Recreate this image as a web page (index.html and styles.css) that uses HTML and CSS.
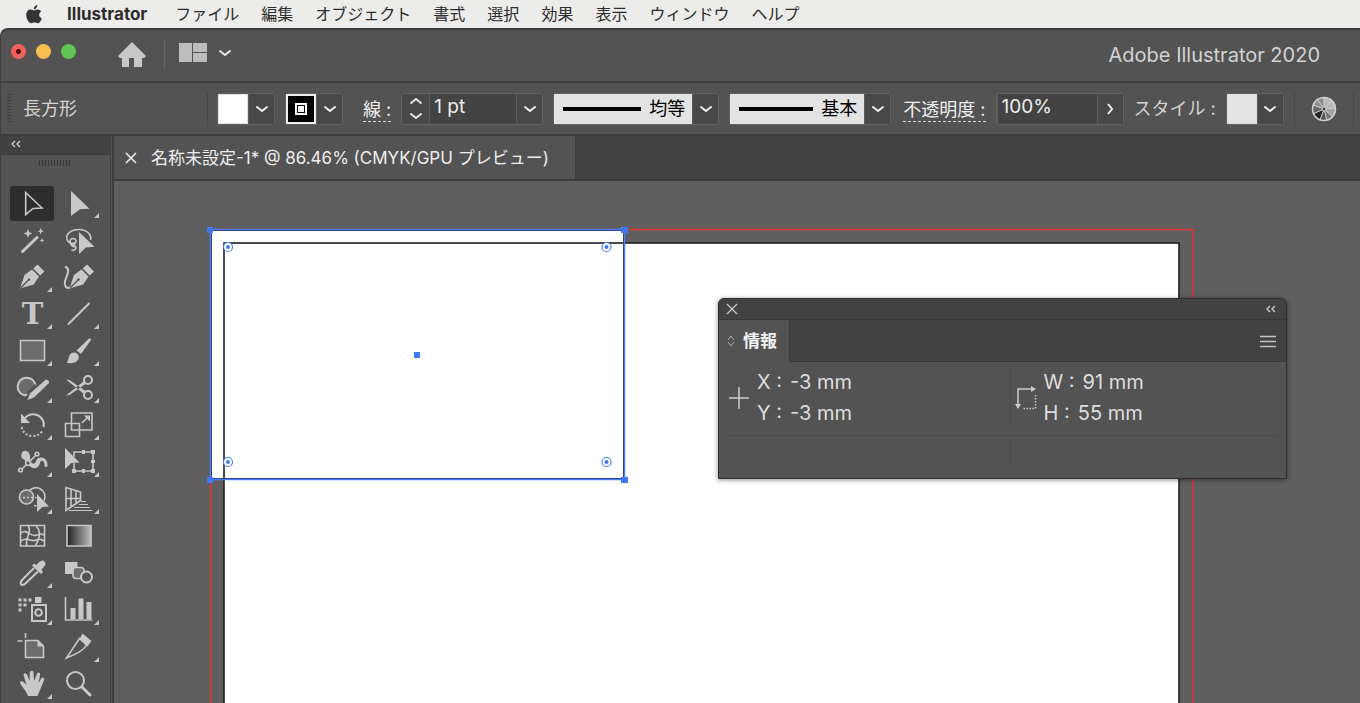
FILE: index.html
```html
<!DOCTYPE html>
<html lang="ja">
<head>
<meta charset="utf-8">
<title>Adobe Illustrator 2020</title>
<link rel="stylesheet" href="styles.css">
</head>
<body>
<svg class="defs" aria-hidden="true">
  <symbol id="down" viewBox="0 0 14 8"><path d="M2 2l5 4 5-4" fill="none" stroke="currentColor" stroke-width="2" stroke-linecap="round"/></symbol>
  <symbol id="up" viewBox="0 0 14 8"><path d="M2 6l5-4 5 4" fill="none" stroke="currentColor" stroke-width="2" stroke-linecap="round"/></symbol>
  <symbol id="collapse" viewBox="0 0 10 8"><path d="M4 1L1 4l3 3M9 1L6 4l3 3" fill="none" stroke="currentColor" stroke-width="1.4"/></symbol>
</svg>

<nav class="menubar">
  <svg class="apple" viewBox="0 0 16 19" aria-label="Apple"><path d="M11.3 0c.2 2-1.500 4.300-3.500 4.300C7.500 2.300 9.300.4 11.300 0zM8.200 5.500c.7 0 1.700-1 3.400-1 1.500 0 2.900.8 3.600 2-3 1.700-2.500 5.700.6 6.900-.8 2.300-2.400 4.900-4.100 4.900-1.200 0-1.700-.7-3.200-.7s-2.100.7-3.200.7C3.100 18.300.2 13.700.2 10 .2 6.600 2.300 4.600 4.500 4.600c1.600 0 2.700.9 3.700.9z"/></svg>
  <button class="menu app">Illustrator</button>
  <button class="menu">ファイル</button>
  <button class="menu">編集</button>
  <button class="menu">オブジェクト</button>
  <button class="menu">書式</button>
  <button class="menu">選択</button>
  <button class="menu">効果</button>
  <button class="menu">表示</button>
  <button class="menu">ウィンドウ</button>
  <button class="menu">ヘルプ</button>
</nav>

<div class="window">
  <header class="appbar">
    <div class="lights">
      <button class="light red" aria-label="閉じる"></button>
      <button class="light yellow" aria-label="しまう"></button>
      <button class="light green" aria-label="拡大"></button>
    </div>
    <button class="plain home" aria-label="ホーム"><svg width="28" height="26" viewBox="0 0 28 26"><path fill="#c8c8c8" d="M14 0L0 14l2 2h2v9h7v-9h5v9h8v-9h2l2-2z"/></svg></button>
    <span class="rule tall"></span>
    <button class="plain arrange" aria-label="ドキュメントレイアウト">
      <svg width="28" height="19" viewBox="0 0 28 19"><path fill="#bdbdbd" d="M0 0h13v19H0zM14 0h14v9H14zM14 10h14v9H14z"/></svg>
      <svg width="14" height="8"><use href="#down"/></svg>
    </button>
    <h1 class="title">Adobe Illustrator 2020</h1>
  </header>

  <section class="controls">
    <span class="grip"></span>
    <span class="kind">長方形</span>
    <span class="rule"></span>
    <div class="field">
      <button class="swatch white" aria-label="塗り"></button>
      <button class="drop" aria-label="塗りを選択"><svg width="14" height="8"><use href="#down"/></svg></button>
    </div>
    <div class="field">
      <button class="swatch stroke" aria-label="線の色"><span></span></button>
      <button class="drop" aria-label="線の色を選択"><svg width="14" height="8"><use href="#down"/></svg></button>
    </div>
    <label class="name dotted weight-name" for="weight">線 :</label>
    <div class="field">
      <div class="stepper">
        <button aria-label="増やす"><svg width="14" height="8"><use href="#up"/></svg></button>
        <button aria-label="減らす"><svg width="14" height="8"><use href="#down"/></svg></button>
      </div>
      <input class="value weight" id="weight" value="1 pt">
      <button class="drop" aria-label="線幅を選択"><svg width="14" height="8"><use href="#down"/></svg></button>
    </div>
    <div class="field">
      <button class="preview profile"><span class="bar"></span>均等</button>
      <button class="drop" aria-label="可変線幅プロファイル"><svg width="14" height="8"><use href="#down"/></svg></button>
    </div>
    <div class="field">
      <button class="preview brush"><span class="bar"></span>基本</button>
      <button class="drop" aria-label="ブラシ定義"><svg width="14" height="8"><use href="#down"/></svg></button>
    </div>
    <label class="name dotted opacity-name" for="opacity">不透明度 :</label>
    <div class="field">
      <input class="value opacity" id="opacity" value="100%">
      <button class="drop" aria-label="不透明度を選択"><svg width="8" height="14" viewBox="0 0 8 14"><path d="M2 2l4 5-4 5" fill="none" stroke="currentColor" stroke-width="2"/></svg></button>
    </div>
    <span class="name soft">スタイル :</span>
    <div class="field">
      <button class="swatch pale" aria-label="スタイル"></button>
      <button class="drop" aria-label="スタイルを選択"><svg width="14" height="8"><use href="#down"/></svg></button>
    </div>
    <span class="rule"></span>
    <button class="plain recolor" aria-label="オブジェクトを再配色">
      <svg width="26" height="26" viewBox="-13 -13 26 26">
        <circle r="12" fill="#8c8c8c"/>
        <path fill="#b8b8b8" d="M0 0L0-12A12 12 0 0 1 8-9zM0 0L8-9A12 12 0 0 1 12-1z"/>
        <path fill="#a4a4a4" d="M0 0L12-1A12 12 0 0 1 9 8z"/>
        <path fill="#777" d="M0 0L9 8A12 12 0 0 1 3 12z"/>
        <path fill="#555" d="M0 0L3 12A12 12 0 0 1-4 11z"/>
        <path fill="#222" d="M0 0L-4 11A12 12 0 0 1-11 5z"/>
        <path fill="#666" d="M0 0L-11 5A12 12 0 0 1-11-4z"/>
        <path stroke="#d0d0d0" d="M0 0V-12M0 0L8-9M0 0L12-1M0 0L9 8M0 0L3 12M0 0L-4 11M0 0L-11 5M0 0L-11-4M0 0L-7-10"/>
        <circle r="11.500" fill="none" stroke="#cfcfcf" stroke-width="1.500"/>
        <circle r="2" fill="#444" stroke="#d0d0d0"/>
      </svg>
    </button>
    <span class="rule end"></span>
  </section>

  <div class="work">
    <aside class="toolbar">
      <button class="collapse" aria-label="パネルを折りたたむ"><svg width="10" height="8"><use href="#collapse"/></svg></button>
      <span class="handle"></span>
      <div class="tools">
        <button class="tool on" aria-label="選択"><svg viewBox="10 186 44 35"><path class="o" d="M25.700 192.500V214.500L33 208.500L42 208z"/></svg></button>
        <button class="tool more" aria-label="ダイレクト選択"><svg viewBox="57 186 44 35"><path class="f" d="M71 191V216L80 209.300L89.500 208.700z"/></svg></button>

        <button class="tool" aria-label="自動選択"><svg viewBox="10 223 44 35"><path class="o w3" d="M22.500 251.500L37 237.500"/><path class="f" d="M28 229l1.200 3.300 3.300 1.200-3.300 1.200L28 238l-1.200-3.300-3.300-1.200 3.300-1.200zM40.700 228l.9 2.300 2.300.9-2.300.9-.9 2.400-.9-2.400-2.300-.9 2.300-.9zM42 238l.7 1.700 1.700.7-1.700.7-.7 1.700-.7-1.700-1.700-.7 1.700-.7z"/></svg></button>
        <button class="tool" aria-label="なげなわ"><svg viewBox="57 223 44 35"><path class="o" d="M90.500 240C92 235 87 229.500 79 229.500C71 229.500 65.500 234 67 239.500C68 243.500 76 245 76 241C76 237.500 70 237.500 70 241.500C70 246 76 247 75 242M71 243.500C71 249 78 244.500 75.500 249Q74 251 71.500 250"/><path class="f" d="M79 232V254L86 247.500L94.500 246.700z"/></svg></button>

        <button class="tool more" aria-label="ペン"><svg viewBox="10 260 44 35"><path class="f" d="M37.500 264.500l7 7-4.300 4-7-7zM20 288.500l4.500-13.500 7.500-5.500 7 7-5.300 8z"/><path class="cut" d="M20.500 288l8-8"/><circle class="hole" cx="29" cy="279.500" r="1.200"/></svg></button>
        <button class="tool" aria-label="曲線"><svg viewBox="57 260 44 35"><path class="f" d="M87 264.500l7 7-4.300 4-7-7zM69.500 288.500l4.500-13.500 7.500-5.500 7 7-5.300 8z"/><path class="cut" d="M70 288l8-8"/><circle class="hole" cx="78.500" cy="279.500" r="1.200"/><path class="o w2" d="M65 266.500C71 269 67 275 65 281C64 286 66 289 70 287.500"/></svg></button>

        <button class="tool more" aria-label="文字"><svg viewBox="10 297 44 35"><text class="letter" x="32.500" y="324" text-anchor="middle">T</text></svg></button>
        <button class="tool more" aria-label="直線"><svg viewBox="57 297 44 35"><path class="o w2" d="M68 324.500L89.500 303"/></svg></button>

        <button class="tool more" aria-label="長方形"><svg viewBox="10 334 44 35"><path class="o g" d="M20.500 340.500h24v20h-24z"/></svg></button>
        <button class="tool more" aria-label="ブラシ"><svg viewBox="57 334 44 35"><path class="f" d="M89 338.500q2.500-.5 2 1.500L81 354l-4.500-3.500zM66.500 362.500c3-2 1-8.500 6.500-10 4-.5 7 3 5.500 6.500-1.500 4-8 5-12 3.500z"/></svg></button>

        <button class="tool more" aria-label="Shaper"><svg viewBox="10 371 44 35"><path class="o w2 g" d="M25 395.500A9 9 0 1 1 35.500 385L27 394z"/><path d="M36 385l-9 9" stroke="#535353" stroke-width="3"/><path class="f" d="M46 379.500q3.500.5 3 3.500L34 397.500l-6.500 2.500 2.500-6.500z"/></svg></button>
        <button class="tool more" aria-label="はさみ"><svg viewBox="57 371 44 35"><g class="o w2"><circle cx="88" cy="380" r="4"/><circle cx="88" cy="395" r="4"/></g><path class="f" d="M66 379.500l3.500.5 16 11-1.500 3zM66 395.500l3.500-.5 16-11-1.500-3z"/></svg></button>

        <button class="tool more" aria-label="回転"><svg viewBox="10 408 44 35"><path class="o w2" d="M24 419Q29 413.500 35 414.500C41 415.500 45 421 43.500 427"/><path class="f" d="M21 413.500V423H30z"/><path class="o w2 dots" d="M42 431.500Q38 436.500 32 436Q24 435.500 21.500 427"/></svg></button>
        <button class="tool more" aria-label="拡大・縮小"><svg viewBox="57 408 44 35"><path class="o" d="M71.500 413h20.500v17H71.500zM65.500 423.500H79.500V436.500H65.500zM82 423l5-5"/><path class="f" d="M84 415.500h6V421.500z"/></svg></button>

        <button class="tool more" aria-label="線幅"><svg viewBox="10 445 44 35"><path class="o w3" d="M23 457C22 450 28 451 28.500 458C29 468 37 468 38 463C39 456 46 459 46 465.500"/><path class="f" d="M22 458C20 449 31 449 30 458L27 462zM29 465C33 471 40 468 40 462L44 459C40 456 36 459 36 461C35 465 32 464 30 461z"/><path class="o" d="M21 470L37 454"/><g class="o k"><circle cx="20.500" cy="470" r="1.800"/><circle cx="28" cy="463" r="2.400"/><circle cx="37" cy="454" r="1.800"/></g></svg></button>
        <button class="tool more" aria-label="自由変形"><svg viewBox="57 445 44 35"><path class="o" d="M74 452h19v19h-19z"/><path class="f" d="M72 469h4v4h-4zM91 469h4v4h-4zM91 450h4v4h-4zM82 450h3v4h-3zM82 469h3v4h-3zM91 460h4v3h-4z"/><path class="f e" d="M65 448V469L71.500 463L79.500 462.500z"/></svg></button>

        <button class="tool more" aria-label="シェイプ形成"><svg viewBox="10 482 44 35"><path class="o" d="M29 491A9 9 0 1 1 34 505.500"/><circle class="o g" cx="26.500" cy="497" r="7"/><path class="o dots" d="M23 497.500H38"/><path class="f e" d="M37 494V512L42.500 507L49 506.500z"/></svg></button>
        <button class="tool more" aria-label="遠近グリッド"><svg viewBox="57 482 44 35"><path class="o" d="M66 487.500L80.500 492V500.500L66 510.500zM71 489V507M76 490.500V504M66 498.500H80.500"/><path class="o w1" d="M81 501.500H86M79 504.500H88M74 507.500H90M69 510.500H92.500"/></svg></button>

        <button class="tool" aria-label="メッシュ"><svg viewBox="10 519 44 35"><path class="o" d="M20.500 525.500h24v20.500h-24zM28 526C33 532 24 538 27 546M36 526C42 532 39 540 35 546M21 533C27 528 30 538 37 535Q41 533 44 535M21 541C27 536 32 543 36 540Q40 538 44 541"/></svg></button>
        <button class="tool" aria-label="グラデーション"><svg viewBox="57 519 44 35"><defs><linearGradient id="ramp"><stop stop-color="#222"/><stop offset="1" stop-color="#bbb"/></linearGradient></defs><path class="o ramp" d="M67 525.500h24v20.500h-24z"/></svg></button>

        <button class="tool more" aria-label="スポイト"><svg viewBox="10 556 44 35"><path class="o w2" d="M34 568L22.500 579.500Q20 582 21 584.500Q23 586 26 583L38 571.500"/><path class="f" d="M32 565.500l2-2 2.500 1.500C39 562 42 559 44.500 561.500S44 567 41.500 569.500L43 572l-2 2z"/></svg></button>
        <button class="tool" aria-label="ブレンド"><svg viewBox="57 556 44 35"><path class="f" d="M65 562h12.500v12H65z"/><rect class="o g" x="73" y="567.500" width="11" height="11" rx="3"/><circle class="o w2 k" cx="86.500" cy="577" r="5.500"/></svg></button>

        <button class="tool more" aria-label="シンボルスプレー"><svg viewBox="10 593 44 35"><path class="f" d="M18.500 598.500h3v3h-3zM23.500 598.500h3v3h-3zM28.500 598.500h3v3h-3zM18.500 603.500h3v3h-3zM23.500 603.500h3v3h-3zM18.500 608.500h3v3h-3zM35 597h6.500v6H35z"/><path class="o w2" d="M32 605h14v16H32z"/><circle class="o w2" cx="38.500" cy="612.500" r="3.300"/></svg></button>
        <button class="tool more" aria-label="棒グラフ"><svg viewBox="57 593 44 35"><path class="o" d="M65.500 597V620H92.500"/><path class="f" d="M70.500 608h5v11h-5zM78.500 598.500h5v20.500h-5zM86.500 602h5v17h-5z"/></svg></button>

        <button class="tool" aria-label="アートボード"><svg viewBox="10 630 44 35"><path class="o g" d="M25.500 640.500H38L43.500 646V657.500H25.500z"/><path class="f" d="M37.500 640.500V646.500H43.500z"/><path class="o" d="M17.500 641H22.500M25.500 633V638"/></svg></button>
        <button class="tool more" aria-label="スライス"><svg viewBox="57 630 44 35"><path class="o" d="M66.500 658L79.500 638.500L86.500 645Q84 651 66.500 658z"/><path class="f" d="M82.500 633.500l9 7.500-4 5.500-8-7.500z"/></svg></button>

        <button class="tool more" aria-label="手のひら"><svg viewBox="10 667 44 35"><path class="f" d="M28 696C26 690 21.500 687 20 682.500C20.500 680 24 681.500 26.500 685L23.500 675C24 672.500 26.500 673 27.500 675.500L29.500 681L29.800 672.500C30.500 670 33.500 670.500 33.500 672.500L34.200 681L37 673.500C38.500 671.500 40.500 673 40 675.500L38.500 683L41.500 678C43.500 676.500 45 678.500 44 680.500L40 690L37.500 696z"/></svg></button>
        <button class="tool" aria-label="ズーム"><svg viewBox="57 667 44 35"><circle class="o w2" cx="75.500" cy="680.500" r="8.500"/><path class="o w3" d="M82 687L90 695"/></svg></button>
      </div>
    </aside>

    <main class="main">
      <div class="tabs">
        <div class="tab">
          <button class="plain" aria-label="閉じる"><svg width="12" height="12" viewBox="0 0 12 12"><path d="M1 1l10 10M11 1L1 11" stroke="#eee" stroke-width="1.600"/></svg></button>
          <span>名称未設定-1* @ 86.46% (CMYK/GPU プレビュー)</span>
        </div>
      </div>
      <div class="canvas">
        <svg class="artwork" aria-label="アートボード">
          <rect x="97" y="48.500" width="982" height="700" fill="none" stroke="#e0342c" stroke-width="1.500"/>
          <rect x="110" y="62" width="955" height="700" fill="#fff"/>
          <rect x="97" y="49" width="413" height="249" fill="#fff"/>
          <rect x="110" y="62" width="955" height="700" fill="none" stroke="#1e1e1e" stroke-width="1.600"/>
          <g fill="none">
            <rect x="97" y="49" width="413" height="249" stroke="#2b3550" stroke-width="2"/>
            <rect x="96.500" y="48.500" width="414" height="250" stroke="#4a7dff" stroke-width="1.500"/>
          </g>
          <path fill="#3f78ff" d="M93 46h6v6h-6zM507 46h7v6h-7zM93 296h6v6h-6zM507 296h7v6h-7zM300 171h6v6h-6z"/>
          <g fill="#fff" stroke="#4a7dff" stroke-width="1.200">
            <circle cx="114" cy="66" r="4.500"/><circle cx="492.500" cy="66" r="4.500"/><circle cx="114" cy="281" r="4.500"/><circle cx="492.500" cy="281" r="4.500"/>
          </g>
          <g fill="#3f78ff">
            <circle cx="114" cy="66" r="2"/><circle cx="492.500" cy="66" r="2"/><circle cx="114" cy="281" r="2"/><circle cx="492.500" cy="281" r="2"/>
          </g>
        </svg>

        <section class="info">
          <div class="info-head">
            <button class="plain" aria-label="閉じる"><svg width="12" height="12" viewBox="0 0 12 12"><path d="M1 1l10 10M11 1L1 11" stroke="#ccc" stroke-width="1.300"/></svg></button>
            <button class="plain" aria-label="折りたたむ"><svg width="10" height="8"><use href="#collapse"/></svg></button>
          </div>
          <div class="info-tabs">
            <button class="info-tab"><svg width="8" height="12" viewBox="0 0 8 12"><path d="M1 5l3-4 3 4M1 7l3 4 3-4" fill="none" stroke="#aaa"/></svg>情報</button>
            <button class="plain" aria-label="パネルメニュー"><svg width="16" height="13" viewBox="0 0 16 13"><path d="M0 1.500h16M0 6.500h16M0 11.500h16" stroke="#c4c4c4" stroke-width="1.500"/></svg></button>
          </div>
          <div class="info-body">
            <div class="cell">
              <svg width="22" height="24" viewBox="0 0 22 24"><path d="M1 12h20M11 1v22" stroke="#ccc" stroke-width="1.500"/></svg>
              <dl><div><dt>X :</dt><dd>-3 mm</dd></div><div><dt>Y :</dt><dd>-3 mm</dd></div></dl>
            </div>
            <div class="cell">
              <svg width="22" height="24" viewBox="0 0 22 24"><path d="M3 19V3H17" fill="none" stroke="#ccc" stroke-width="1.500"/><path fill="#ccc" d="M16 0l5 3-5 3zM0 18h6l-3 5z"/><path d="M20.500 9V23M19 22.500H8" fill="none" stroke="#ccc" stroke-width="1.500" stroke-dasharray="1.500 1.500"/></svg>
              <dl><div><dt>W :</dt><dd>91 mm</dd></div><div><dt>H :</dt><dd>55 mm</dd></div></dl>
            </div>
            <div class="cell blank"></div>
            <div class="cell blank"></div>
          </div>
        </section>
      </div>
    </main>
  </div>
</div>
</body>
</html>
```
FILE: styles.css
```css
* { box-sizing: border-box; }

body {
  margin: 0;
  height: 100vh;
  display: flex;
  flex-direction: column;
  overflow: hidden;
  background: #ececea;
  color: #e6e6e6;
  font: 18px/24px Inter, "Noto Sans CJK JP", sans-serif;
}

button, input { font: inherit; color: inherit; border: 0; margin: 0; padding: 0; background: none; border-radius: 0; }
svg { display: block; flex: none; }
.defs { position: absolute; width: 0; height: 0; }
.plain { display: flex; align-items: center; }

.menubar {
  flex: none;
  display: flex;
  align-items: center;
  gap: 22px;
  height: 28px;
  padding-left: 26px;
  color: #2c2c2c;
  font-size: 16px;
}
.apple { width: 16px; height: 19px; fill: #333; }
.menu { white-space: nowrap; }
.app { font-size: 17px; font-weight: 700; padding: 0 6px 0 3px; }

.window {
  flex: 1;
  min-height: 0;
  display: flex;
  flex-direction: column;
  background: #535353;
  border-top: 2px solid #3a3a3a;
  border-left: 1px solid #3f3f3f;
  border-top-left-radius: 8px;
}

.appbar {
  flex: none;
  display: flex;
  align-items: center;
  height: 53px;
  padding: 0 40px 2px 10px;
  border-bottom: 2px solid #3f3f3f;
}
.lights { display: flex; gap: 10px; padding-bottom: 7px; }
.light { width: 15px; height: 15px; border-radius: 50%; }
.red { background: radial-gradient(circle, #4a0906 2px, #f2605a 3px); }
.yellow { background: #f6be4f; }
.green { background: #62c655; }
.home { margin-left: 42px; }
.rule { flex: none; width: 1px; height: 34px; background: #484848; }
.rule.tall { height: 30px; margin: 0 14px 0 18px; background: #656565; }
.arrange { gap: 11px; padding-bottom: 4px; }
.title { margin: 0 0 0 auto; color: #d2d2d2; font-size: 20px; font-weight: 400; }

.controls {
  flex: none;
  display: flex;
  align-items: center;
  gap: 10px;
  height: 53px;
  padding-left: 6px;
  border-bottom: 2px solid #3d3d3d;
}
.grip { width: 4px; height: 30px; background: repeating-linear-gradient(#3c3c3c 0 1px, #535353 1px 3px); }
.kind { width: 174px; color: #d4d4d4; margin-left: 2px; }
.controls .rule { margin-right: -1px; }
.field { flex: none; display: flex; height: 32px; border: 1px solid #626262; border-radius: 3px; }
.swatch { width: 30px; height: 30px; border: 1px solid #ddd; }
.white { background: #fff; }
.pale { background: #e4e4e4; }
.stroke { display: grid; place-items: center; background: #000; border: 2px solid #eee; }
.stroke span { width: 12px; height: 12px; border: 2px solid #fff; background: #fff; box-shadow: inset 0 0 0 1px #000; }
.drop { display: grid; place-items: center; width: 26px; background: #484848; color: #eee; border-left: 1px solid #5c5c5c; }
.name { flex: none; color: #f0f0f0; line-height: 22px; margin-top: 4px; white-space: nowrap; }
.dotted { border-bottom: 1px dashed #ddd; }
.weight-name { margin-left: 10px; }
.opacity-name { margin-left: 2px; }
.soft { margin-top: 0; color: #d4d4d4; }
.stepper { display: grid; width: 27px; background: #484848; }
.stepper button { display: grid; place-items: center; }
.value { background: #434343; border-left: 1px solid #5c5c5c; padding: 0 4px 4px; color: #eee; font-size: 19px; }
.weight { width: 87px; }
.opacity { width: 100px; }
.preview { display: flex; align-items: center; justify-content: space-between; padding: 0 7px 0 9px; background: #e3e3e3; color: #000; white-space: nowrap; }
.bar { height: 4px; background: #000; flex: 1; margin-right: 8px; }
.profile { width: 138px; }
.brush { width: 134px; }
.recolor { margin-left: 7px; }
.rule.end { margin-left: 6px; }

.work { flex: 1; min-height: 0; display: flex; }

.toolbar {
  flex: none;
  width: 110px;
  display: flex;
  flex-direction: column;
  overflow: hidden;
  border-right: 1px solid #404040;
}
.collapse { flex: none; height: 19px; padding: 0 10px 2px; display: flex; align-items: center; background: #424242; border-bottom: 1px solid #3b3b3b; color: #ccc; }
.handle { flex: none; width: 31px; height: 6px; margin: 5px 0 20px 38px; background: repeating-linear-gradient(90deg, #363636 0 1px, #535353 1px 3px); }
.tools { display: grid; grid-template-columns: 44px 44px; gap: 2px 3px; padding-left: 9px; }
.tool { position: relative; width: 44px; height: 35px; border-radius: 3px; }
.tool svg { width: 44px; height: 35px; }
.on { background: #2e2e2e; }
.more::after { content: ""; position: absolute; right: 2px; bottom: 3px; border-left: 5px solid transparent; border-bottom: 5px solid #c8c8c8; }

.f { fill: #c8c8c8; }
.o { fill: none; stroke: #c8c8c8; stroke-width: 1.6; }
.w1 { stroke-width: 1; }
.w2 { stroke-width: 2; }
.w3 { stroke-width: 3; stroke-linecap: round; }
.g { fill: #6c6c6c; }
.k { fill: #535353; }
.e { stroke: #535353; stroke-width: 1; paint-order: stroke; }
.ramp { fill: url(#ramp); }
.dots { stroke-dasharray: 2 2; }
.cut { stroke: #535353; stroke-width: 1.2; }
.hole { fill: #535353; }
.letter { fill: #c8c8c8; font: 700 29px "DejaVu Serif", serif; }

.main { flex: 1; min-width: 0; display: flex; flex-direction: column; margin-left: 1px; border-left: 2px solid #3e3e3e; }
.tabs { flex: none; display: flex; height: 45px; background: #424242; border-bottom: 2px solid #3b3b3b; }
.tab { display: flex; align-items: center; gap: 14px; padding: 0 26px 0 11px; background: #535353; border-right: 1px solid #3b3b3b; color: #eee; font-size: 17px; white-space: nowrap; }

.canvas { position: relative; flex: 1; min-height: 0; overflow: hidden; background: #5f5f5f; }
.artwork { width: 100%; height: 100%; }

.info {
  position: absolute;
  top: 117px;
  right: 73px;
  width: 569px;
  background: #535353;
  border: 1px solid #2e2e2e;
  border-radius: 6px 6px 0 0;
  box-shadow: 0 1px 5px rgba(0, 0, 0, .45);
  overflow: hidden;
}
.info-head { display: flex; justify-content: space-between; padding: 0 10px 0 7px; height: 21px; background: #424242; border-bottom: 1px solid #383838; color: #ccc; }
.info-tabs { display: flex; justify-content: space-between; height: 42px; padding-right: 10px; background: #424242; box-shadow: inset 0 -1px #383838; }
.info-tab { display: flex; align-items: center; gap: 8px; padding: 0 12px 0 8px; background: #535353; border-right: 1px solid #383838; color: #f2f2f2; font-size: 17px; font-weight: 600; }
.info-body { display: grid; grid-template-columns: 1fr 1fr; margin: 4px 7px 0; }
.cell { display: flex; align-items: center; gap: 7px; height: 70px; padding: 0 0 6px 2px; border-bottom: 1px solid #4a4a4a; }
.cell:nth-child(even) { padding-left: 12px; }
.cell:nth-child(even)::before { content: ""; width: 1px; height: 60px; margin-left: -5px; margin-right: -3px; background: #4b4b4b; }
.cell.blank { height: 42px; border: 0; }
.cell.blank:nth-child(even)::before { height: 28px; }
dl { margin: 0; font-size: 20px; line-height: 31px; color: #dedede; }
dl div { display: flex; gap: 8px; }
dt, dd { margin: 0; white-space: nowrap; }
```
